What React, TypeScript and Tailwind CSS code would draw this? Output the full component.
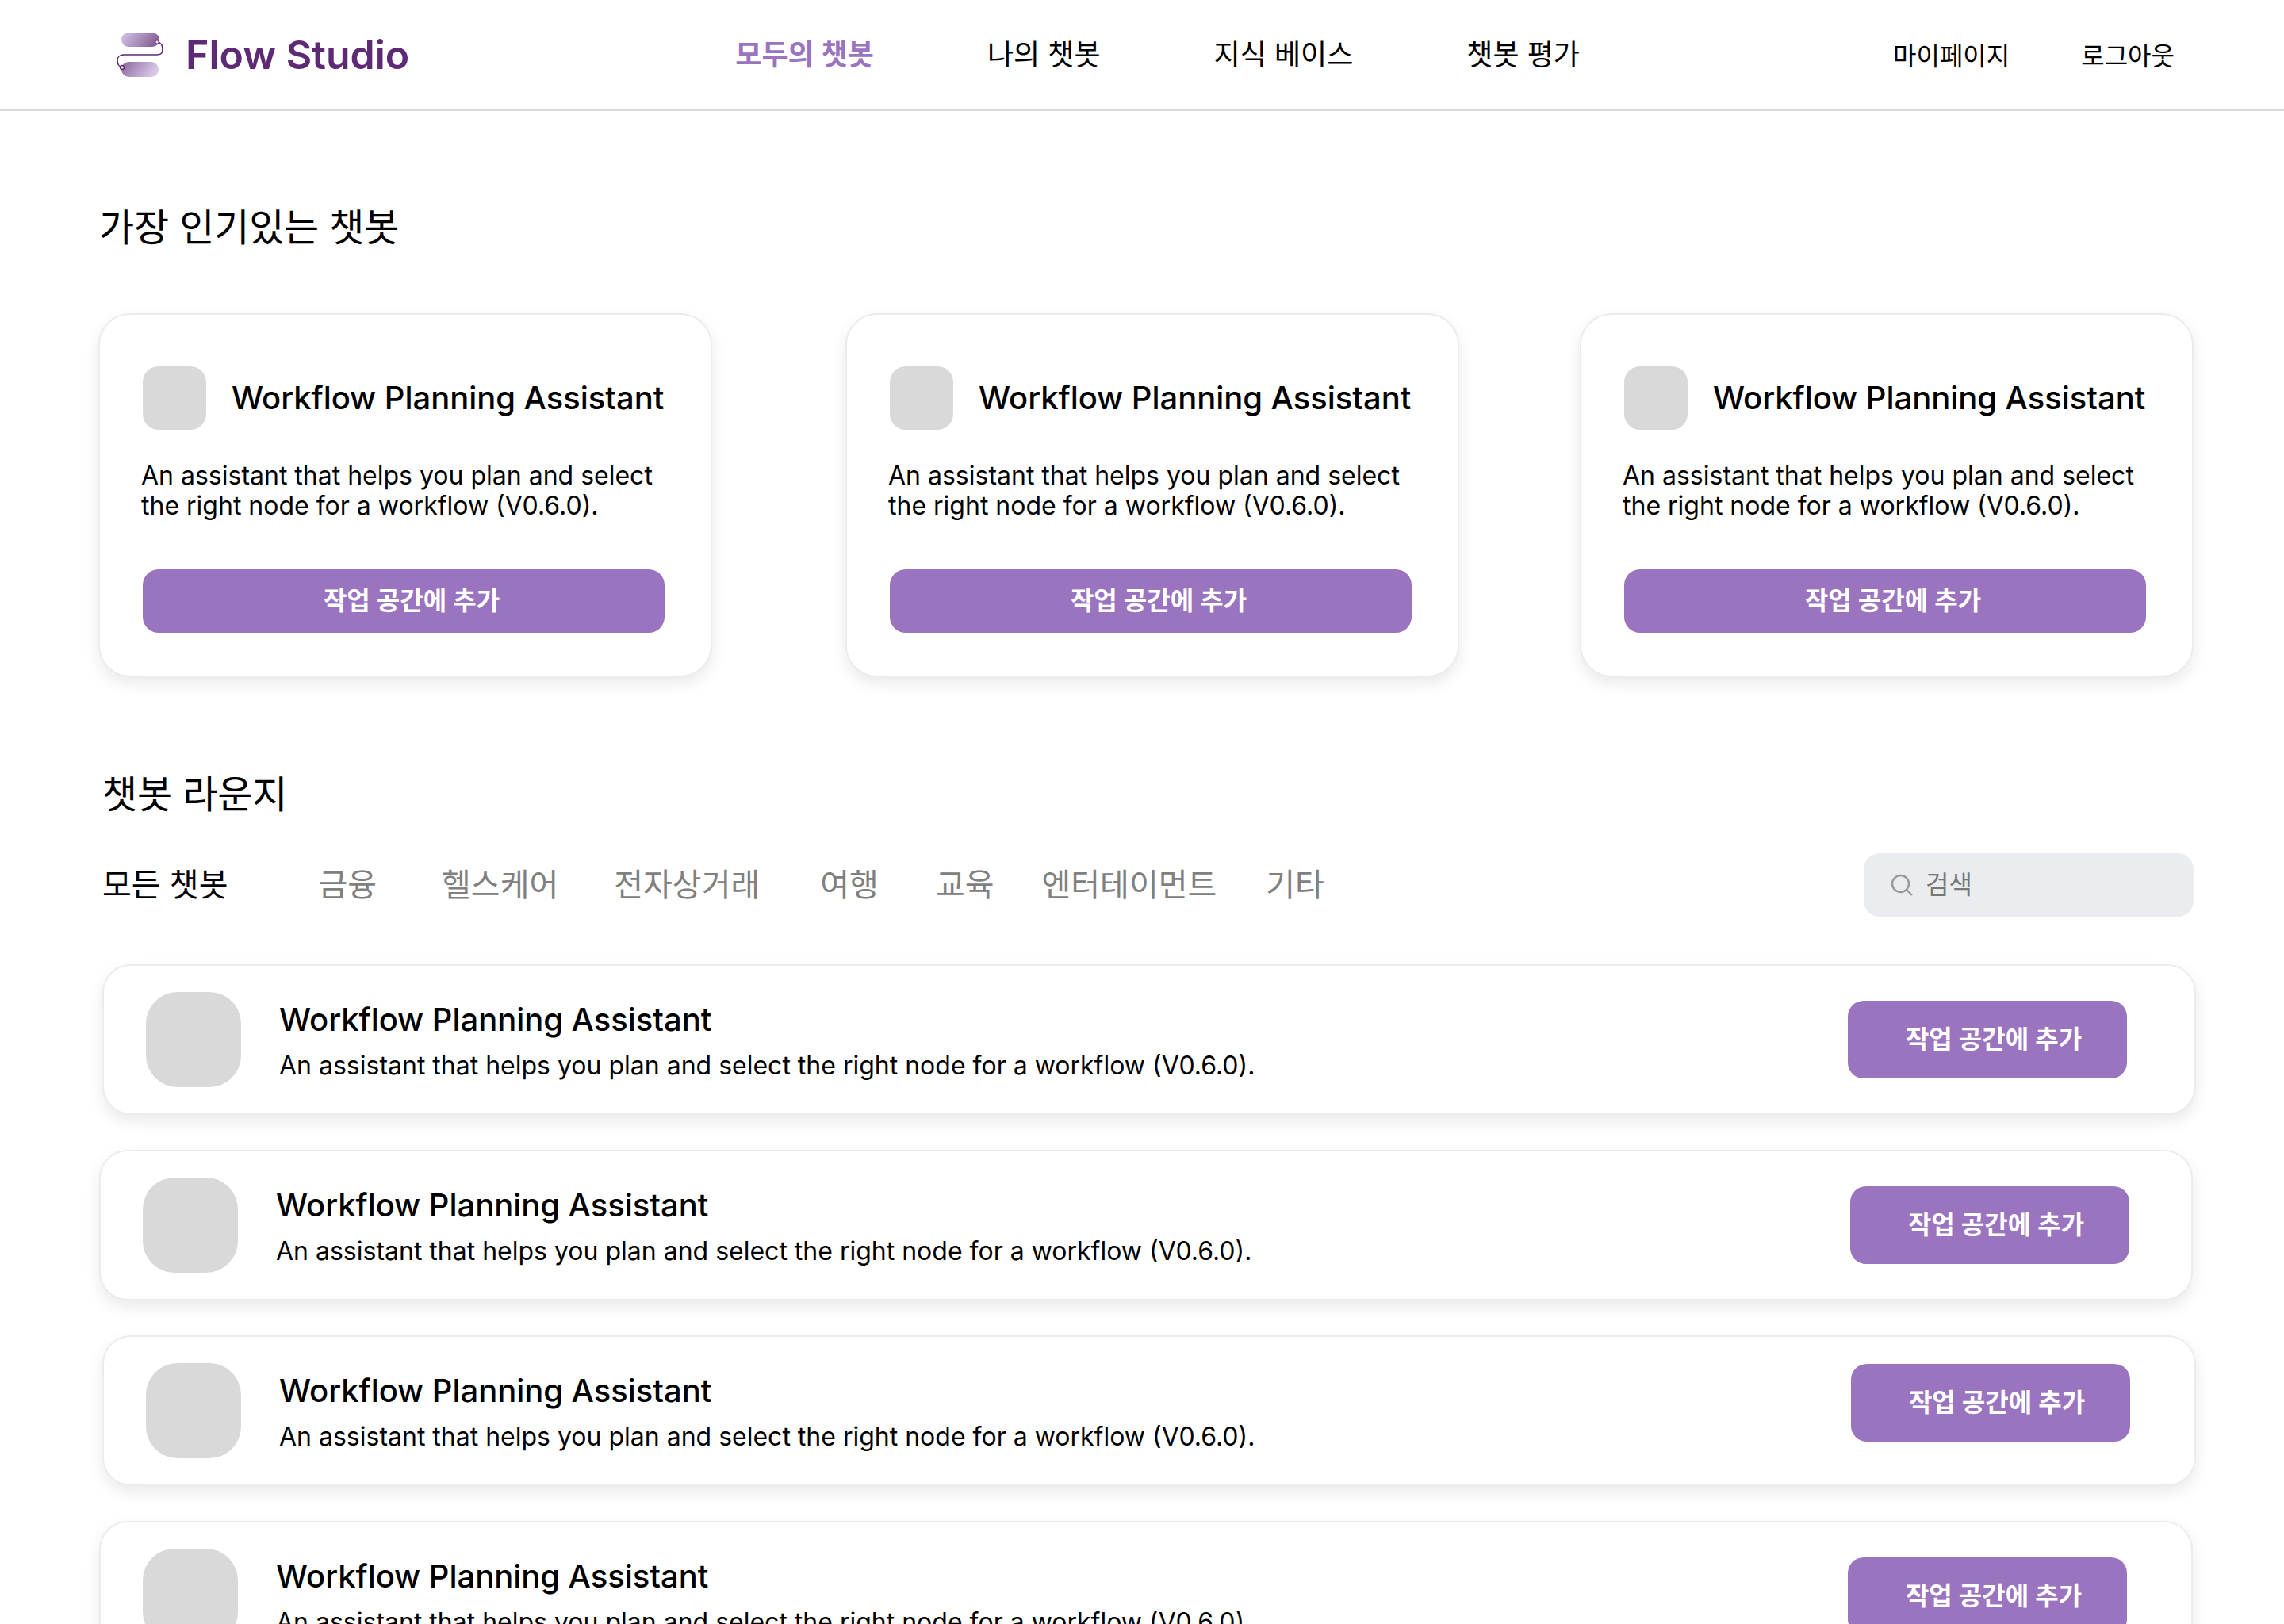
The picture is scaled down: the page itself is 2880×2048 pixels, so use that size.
const FONT = "font-['Inter','Noto_Sans_CJK_KR',sans-serif]";

const Logo = () => (
  <svg width="62" height="64" viewBox="0 0 62 64" className="shrink-0">
    <defs>
      <linearGradient id="logoTop" x1="0" y1="0" x2="1" y2="0.3">
        <stop offset="0" stopColor="#d6c7e8" />
        <stop offset="1" stopColor="#8a6499" />
      </linearGradient>
      <linearGradient id="logoBottom" x1="0" y1="0" x2="1" y2="0.3">
        <stop offset="0" stopColor="#8a6499" />
        <stop offset="1" stopColor="#d6c7e8" />
      </linearGradient>
    </defs>
    <rect x="7" y="4" width="48" height="18" rx="9" fill="url(#logoTop)" />
    <rect x="7" y="41" width="47" height="19" rx="9.5" fill="url(#logoBottom)" />
    <path
      d="M53 16C58 17 59 22 59 26C59 30 56 32 52 32L10 32C5 32 2 35 2 39C2 43 4 47 8 48"
      fill="none"
      stroke="#5f2a75"
      strokeWidth="1.5"
    />
    <circle cx="52" cy="16" r="2.5" fill="#e8def0" stroke="#5f2a75" strokeWidth="1.5" />
    <circle cx="8" cy="48" r="2.5" fill="#e8def0" stroke="#5f2a75" strokeWidth="1.5" />
  </svg>
);

const Card = ({ className }: { className: string }) => (
  <div className={`w-[774px] h-[459px] shrink-0 rounded-[40px] bg-white border-2 border-[#ecebf0] shadow-[0_8px_18px_rgba(50,50,70,0.1)] pt-[65px] pl-[54px] ${className}`}>
    <div className="flex items-center">
      <div className="w-[80px] h-[80px] rounded-[20px] bg-[#d9d9d9] shrink-0" />
      <p className="ml-[32px] text-[40px] tracking-[-0.05px] font-medium whitespace-nowrap text-black">Workflow Planning Assistant</p>
    </div>
    <p className="mt-[39px] -ml-[2px] text-[32px] leading-[38px] text-black whitespace-nowrap">
      An assistant that helps you plan and select
      <br />
      the right node for a workflow (V0.6.0).
    </p>
    <button className="mt-[61px] w-[658px] h-[80px] pl-[20px] rounded-[20px] bg-[#9b74bf] text-white text-[32px] font-semibold">작업 공간에 추가</button>
  </div>
);

const Row = ({ className, btn }: { className: string; btn: string }) => (
  <div className={`w-[2640px] h-[190px] shrink-0 rounded-[36px] bg-white border-2 border-[#ecebf0] shadow-[0_8px_18px_rgba(50,50,70,0.1)] flex items-center pl-[53px] ${className}`}>
    <div className="w-[120px] h-[120px] rounded-[40px] bg-[#d9d9d9] shrink-0" />
    <div className="ml-[48px] mt-[4px]">
      <p className="text-[40px] leading-[52px] tracking-[-0.05px] font-medium text-black">Workflow Planning Assistant</p>
      <p className="mt-[10px] text-[32px] leading-[44px] text-black">An assistant that helps you plan and select the right node for a workflow (V0.6.0).</p>
    </div>
    <button className={`w-[352px] h-[98px] pl-[16px] rounded-[20px] bg-[#9b74bf] text-white text-[32px] font-semibold shrink-0 ${btn}`}>작업 공간에 추가</button>
  </div>
);

export default function App() {
  return (
    <div className={`w-[2880px] h-[2048px] overflow-hidden bg-white ${FONT}`}>
      <header className="h-[140px] border-b-2 border-[#d9d9de] flex items-center">
        <div className="ml-[146px] flex items-center">
          <Logo />
          <span className="ml-[26px] text-[50px] font-semibold text-[#5f2a75]">Flow Studio</span>
        </div>
        <nav className="ml-[411px] flex gap-[143px] text-[36px]">
          <span className="font-semibold text-[#9b74bf]">모두의 챗봇</span>
          <span>나의 챗봇</span>
          <span>지식 베이스</span>
          <span>챗봇 평가</span>
        </nav>
        <div className="ml-auto mr-[138px] mt-[3px] flex gap-[90px] text-[32px]">
          <span>마이페이지</span>
          <span>로그아웃</span>
        </div>
      </header>
      <main className="pl-[125px]">
        <h2 className="mt-[117px] text-[48px] leading-[60px] font-normal tracking-[-0.2px]">가장 인기있는 챗봇</h2>
        <div className="mt-[78px] flex">
          <Card className="-ml-[1px]" />
          <Card className="ml-[168px]" />
          <Card className="ml-[152px]" />
        </div>
        <h2 className="mt-[118px] ml-[4px] text-[48px] leading-[60px] tracking-[-0.2px]">챗봇 라운지</h2>
        <div className="mt-[44px] w-[2641px] flex items-center h-[80px] text-[40px] text-[#808080] pl-[4px]">
          <span className="text-black">모든 챗봇</span>
          <span className="ml-[114px]">금융</span>
          <span className="ml-[82px]">헬스케어</span>
          <span className="ml-[70px]">전자상거래</span>
          <span className="ml-[76px]">여행</span>
          <span className="ml-[72px]">교육</span>
          <span className="ml-[60px]">엔터테이먼트</span>
          <span className="ml-[62px]">기타</span>
          <div className="ml-auto w-[416px] h-[80px] rounded-[20px] bg-[#ebecf0] flex items-center pl-[34px] text-[32px] text-[#777777]">
            <svg width="28" height="28" viewBox="0 0 28 28" fill="none" stroke="#999999" strokeWidth="2.4">
              <circle cx="12.5" cy="12.5" r="10.5" />
              <path d="M20 20l7 7" />
            </svg>
            <span className="ml-[16px]">검색</span>
          </div>
        </div>
        <div className="mt-[60px] flex flex-col gap-[44px]">
          <Row className="ml-[4px]" btn="ml-auto mr-[85px]" />
          <Row className="" btn="ml-auto mr-[78px]" />
          <Row className="ml-[4px]" btn="ml-auto mr-[81px] mb-[20px]" />
          <Row className="" btn="ml-auto mr-[81px]" />
        </div>
      </main>
    </div>
  );
}
